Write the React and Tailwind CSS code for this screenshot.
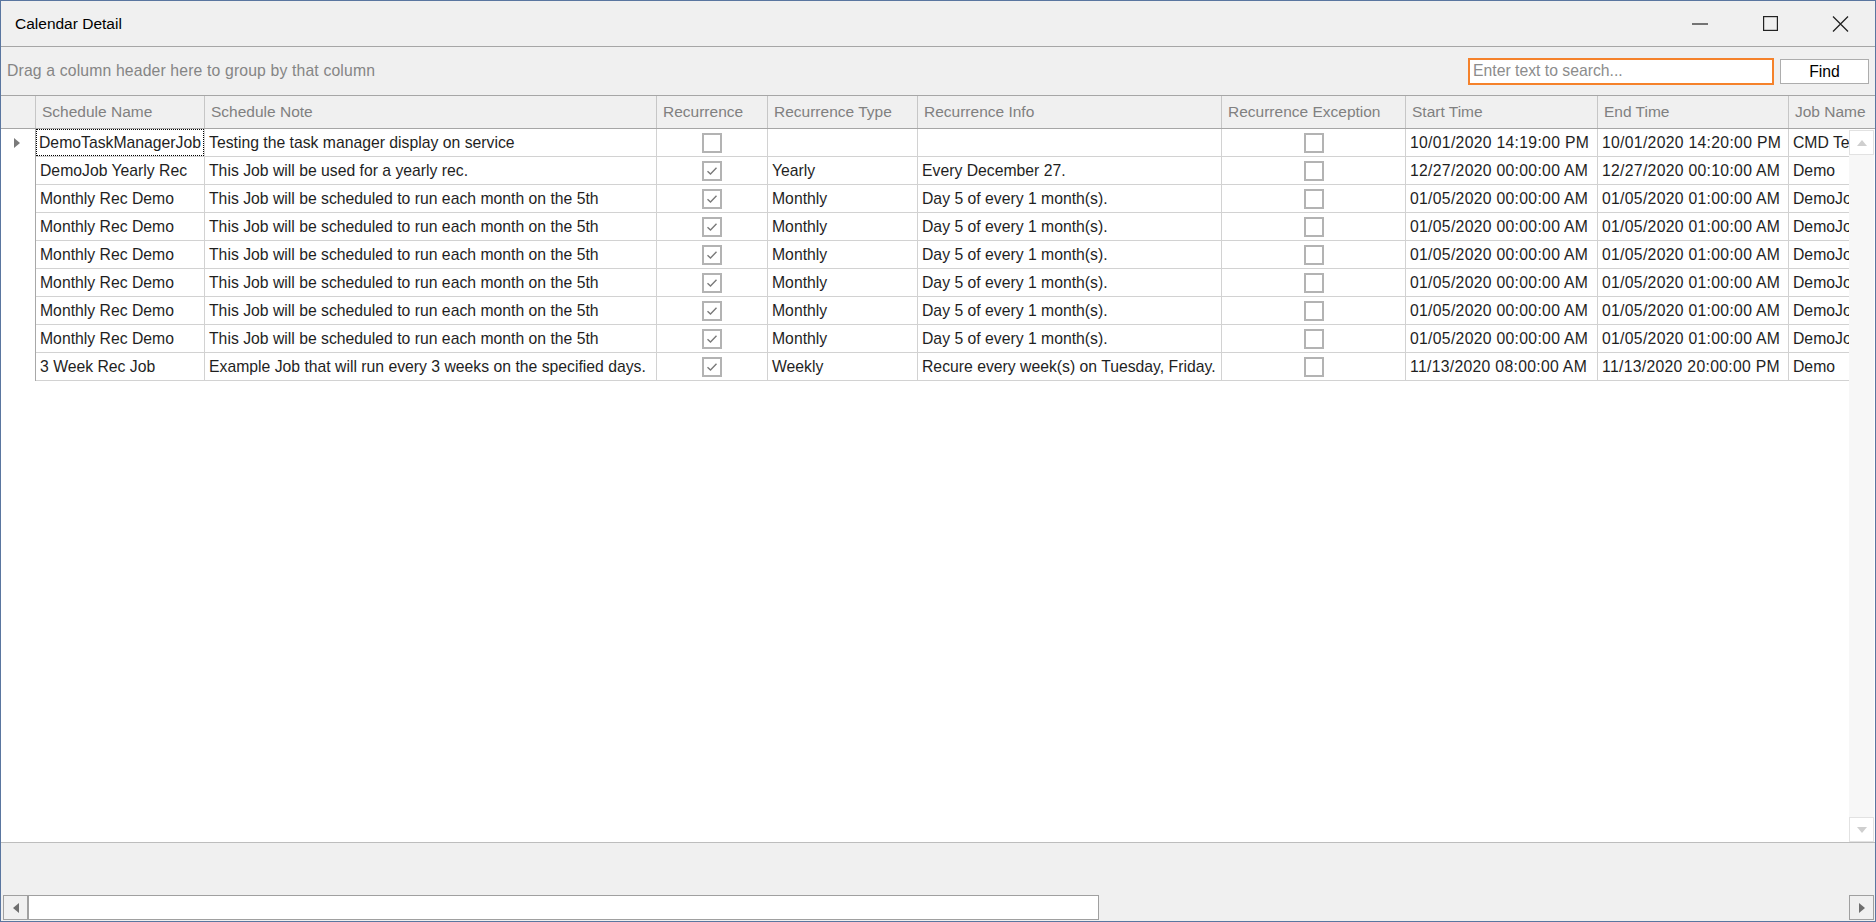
import { useState } from 'react'

const columns = [
  { key: 'name', title: 'Schedule Name', w: 'w-[169px]' },
  { key: 'note', title: 'Schedule Note', w: 'w-[452px]' },
  { key: 'rec', title: 'Recurrence', w: 'w-[111px]', check: true },
  { key: 'type', title: 'Recurrence Type', w: 'w-[150px]' },
  { key: 'info', title: 'Recurrence Info', w: 'w-[304px]' },
  { key: 'exc', title: 'Recurrence Exception', w: 'w-[184px]', check: true },
  { key: 'start', title: 'Start Time', w: 'w-[192px]', extra: 'tracking-[0.3px]' },
  { key: 'end', title: 'End Time', w: 'w-[191px]', extra: 'tracking-[0.3px]' },
  { key: 'job', title: 'Job Name', w: 'w-[150px]' },
]

const monthly = {
  name: 'Monthly Rec Demo',
  note: 'This Job will be scheduled to run each month on the 5th',
  rec: true,
  type: 'Monthly',
  info: 'Day 5 of every 1 month(s).',
  exc: false,
  start: '01/05/2020 00:00:00 AM',
  end: '01/05/2020 01:00:00 AM',
  job: 'DemoJob',
}

const rows = [
  {
    name: 'DemoTaskManagerJob',
    note: 'Testing the task manager display on service',
    rec: false,
    type: '',
    info: '',
    exc: false,
    start: '10/01/2020 14:19:00 PM',
    end: '10/01/2020 14:20:00 PM',
    job: 'CMD Test',
  },
  {
    name: 'DemoJob Yearly Rec',
    note: 'This Job will be used for a yearly rec.',
    rec: true,
    type: 'Yearly',
    info: 'Every December 27.',
    exc: false,
    start: '12/27/2020 00:00:00 AM',
    end: '12/27/2020 00:10:00 AM',
    job: 'Demo',
  },
  monthly, monthly, monthly, monthly, monthly, monthly,
  {
    name: '3 Week Rec Job',
    note: 'Example Job that will run every 3 weeks on the specified days.',
    rec: true,
    type: 'Weekly',
    info: 'Recure every week(s) on Tuesday, Friday.',
    exc: false,
    start: '11/13/2020 08:00:00 AM',
    end: '11/13/2020 20:00:00 PM',
    job: 'Demo',
  },
]

function CheckBox({ checked }) {
  return (
    <div className="w-[20px] h-[20px] border-2 border-[#b3b3b3] bg-white flex items-center justify-center">
      {checked && (
        <svg width="12" height="10" viewBox="0 0 12 10">
          <path d="M1.5 5.2 L4.5 8 L10.5 1.8" fill="none" stroke="#7a7a7a" strokeWidth="1.4" />
        </svg>
      )}
    </div>
  )
}

function Arrow({ dir, color }) {
  const d = {
    up: 'M0 6 L5 0 L10 6 Z',
    down: 'M0 0 L10 0 L5 6 Z',
    left: 'M6 0 L6 10 L0 5 Z',
    right: 'M0 0 L6 5 L0 10 Z',
  }[dir]
  const size = dir === 'up' || dir === 'down' ? { width: 10, height: 6 } : { width: 6, height: 10 }
  return (
    <svg {...size} viewBox={`0 0 ${size.width} ${size.height}`}>
      <path d={d} fill={color} />
    </svg>
  )
}

export default function App() {
  const [search, setSearch] = useState('')

  return (
    <div className="w-[1876px] h-[922px] border border-[#5a76a0] bg-[#f0f0f0] flex flex-col overflow-hidden text-[15.75px] text-[#1f1f1f]" style={{ fontFamily: '"Liberation Sans", Arial, sans-serif' }}>
      {/* Title bar */}
      <div className="h-[46px] shrink-0 flex items-center border-b border-[#a6a6a6]">
        <div className="pl-[14px] flex-1 text-black text-[15.5px]">Calendar Detail</div>
        <div className="flex h-full">
          <button className="w-[70px] h-full flex items-center justify-center">
            <svg width="16" height="2" viewBox="0 0 16 2"><path d="M0 1 H16" stroke="#222" strokeWidth="1.2" /></svg>
          </button>
          <button className="w-[70px] h-full flex items-center justify-center">
            <svg width="15" height="15" viewBox="0 0 15 15"><rect x="0.6" y="0.6" width="13.8" height="13.8" fill="none" stroke="#222" strokeWidth="1.2" /></svg>
          </button>
          <button className="w-[70px] h-full flex items-center justify-center">
            <svg width="17" height="16" viewBox="0 0 17 16"><path d="M1 0.5 L16 15.5 M16 0.5 L1 15.5" stroke="#222" strokeWidth="1.3" /></svg>
          </button>
        </div>
      </div>

      {/* Group panel + find */}
      <div className="h-[49px] shrink-0 flex items-center border-b border-[#a6a6a6] pl-[6px] pr-[6px]">
        <div className="flex-1 text-[#858585] tracking-[0.15px]">Drag a column header here to group by that column</div>
        <input
          value={search}
          onChange={e => setSearch(e.target.value)}
          placeholder="Enter text to search..."
          className="w-[306px] h-[27px] border-2 border-[#f5822b] bg-white px-[3px] outline-none placeholder:text-[#8c8c8c]"
        />
        <button className="ml-[6px] w-[89px] h-[25px] border border-[#adadad] bg-white text-black">Find</button>
      </div>

      {/* Column headers */}
      <div className="h-[33px] shrink-0 flex border-b border-[#a6a6a6] overflow-hidden text-[15.5px]">
        <div className="w-[35px] shrink-0 border-r border-[#c6c6c6]" />
        {columns.map(c => (
          <div key={c.key} className={`${c.w} shrink-0 border-r border-[#c6c6c6] flex items-center pl-[6px] text-[#808080] whitespace-nowrap overflow-hidden`}>
            {c.title}
          </div>
        ))}
      </div>

      {/* Rows + vertical scrollbar */}
      <div className="flex-1 min-h-0 flex bg-white border-b border-[#bdbdbd]">
        <div className="flex-1 min-w-0 overflow-hidden">
          {rows.map((r, i) => (
            <div key={i} className="h-[28px] flex">
              <div className="w-[35px] shrink-0 border-r border-[#a8a8a8] flex items-center pl-[13px]">
                {i === 0 && <Arrow dir="right" color="#7a7a7a" />}
              </div>
              {columns.map((c, j) => (
                <div key={c.key} className={`${c.w} shrink-0 border-r border-b border-[#d2d2d2] whitespace-nowrap overflow-hidden ${c.extra || ''}`}>
                  {i === 0 && j === 0 ? (
                    <div className="h-full border border-dotted border-black flex items-center pl-[2px]">{r[c.key]}</div>
                  ) : c.check ? (
                    <div className="h-full flex items-center justify-center"><CheckBox checked={r[c.key]} /></div>
                  ) : (
                    <div className="h-full flex items-center pl-[4px]">{r[c.key]}</div>
                  )}
                </div>
              ))}
            </div>
          ))}
        </div>
        <div className="w-[25px] shrink-0 mt-[1px] mr-[1px] flex flex-col bg-[#f7f7f7]">
          <div className="h-[25px] border border-[#e2e2e2] bg-white flex items-center justify-center"><Arrow dir="up" color="#cfcfcf" /></div>
          <div className="flex-1" />
          <div className="h-[25px] border border-[#e2e2e2] bg-white flex items-center justify-center"><Arrow dir="down" color="#cfcfcf" /></div>
        </div>
      </div>

      {/* Footer space + horizontal scrollbar */}
      <div className="h-[52px] shrink-0" />
      <div className="h-[25px] shrink-0 flex ml-[2px] mr-[1px] mb-[1px]">
        <div className="w-[25px] border border-[#a0a0a0] bg-[#f0f0f0] flex items-center justify-center"><Arrow dir="left" color="#6e6e6e" /></div>
        <div className="w-[1071px] border border-[#a0a0a0] bg-white" />
        <div className="flex-1" />
        <div className="w-[25px] border border-[#a0a0a0] bg-[#f0f0f0] flex items-center justify-center"><Arrow dir="right" color="#6e6e6e" /></div>
      </div>
    </div>
  )
}
